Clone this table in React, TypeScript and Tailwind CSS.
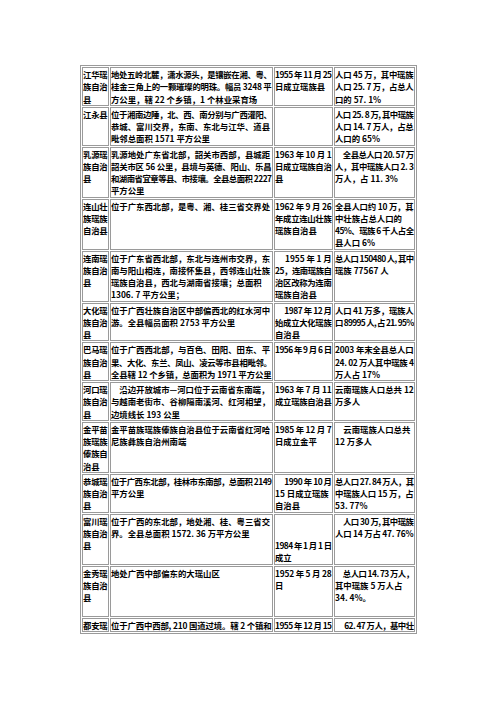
import React, { useLayoutEffect, useRef, useState } from "react";

type Row = [string[], string[], string[], string[]];

const rows: Row[] = [
  [
    ["江华瑶", "族自治", "县"],
    ["地处五岭北麓，潇水源头，是镶嵌在湘、粤、", "桂金三角上的一颗璀璨的明珠。幅员 3248 平", "方公里，辖 22 个乡镇，1 个林业采育场"],
    ["1955 年 11 月 25", "日成立瑶族县"],
    ["人口 45 万，其中瑶族", "人口 25. 7 万，占总人", "口的 57. 1%"],
  ],
  [
    ["江永县"],
    ["位于湘南边陲，北、西、南分别与广西灌阳、", "恭城、富川交界，东南、东北与江华、道县", "毗邻总面积 1571 平方公里"],
    [],
    ["人口 25. 8 万, 其中瑶族", "人口 14. 7 万人，占总", "人口的 65%"],
  ],
  [
    ["乳源瑶", "族自治", "县"],
    ["乳源地处广东省北部，韶关市西部，县城距", "韶关市区 56 公里，县境与英德、阳山、乐昌", "和湖南省宜章等县、市接壤。全县总面积 2227", "平方公里"],
    ["1963 年 10 月 1", "日成立瑶族自治", "县"],
    ["\u3000全县总人口 20. 57 万", "人，其中瑶族人口 2. 3", "万人，占 11. 3%"],
  ],
  [
    ["连山壮", "族瑶族", "自治县"],
    ["位于广东西北部，是粤、湘、桂三省交界处"],
    ["1962 年 9 月 26", "年成立连山壮族", "瑶族自治县"],
    ["全县人口约 10 万，其", "中壮族占总人口的", "45%、瑶族 6 千人占全", "县人口 6%"],
  ],
  [
    ["连南瑶", "族自治", "县"],
    ["位于广东省西北部，东北与连州市交界，东", "南与阳山相连，南接怀集县，西邻连山壮族", "瑶族自治县，西北与湖南省接壤；总面积", "1306. 7 平方公里；"],
    ["\u3000 1955 年 1 月", "25，连南瑶族自", "治区改称为连南", "瑶族自治县"],
    ["总人口 150480 人, 其中", "瑶族 77567 人"],
  ],
  [
    ["大化瑶", "族自治", "县"],
    ["位于广西壮族自治区中部偏西北的红水河中", "游。全县幅员面积 2753 平方公里"],
    ["\u3000 1987 年 12 月", "始成立大化瑶族", "自治县"],
    ["人口 41 万多，瑶族人", "口 89995 人, 占 21. 95%"],
  ],
  [
    ["巴马瑶", "族自治", "县"],
    ["位于广西西北部，与百色、田阳、田东、平", "果、大化、东兰、凤山、凌云等市县相毗邻。", "全县辖 12 个乡镇，总面积为 1971 平方公里"],
    ["1956 年 9 月 6 日"],
    ["2003 年末全县总人口", "24. 02 万人其中瑶族 4", "万人占 17%"],
  ],
  [
    ["河口瑶", "族自治", "县"],
    ["\u3000沿边开放城市—河口位于云南省东南端，", "与越南老街市、谷柳隔南溪河、红河相望，", "边境线长 193 公里"],
    ["1963 年 7 月 11", "成立瑶族自治县"],
    ["云南瑶族人口总共 12", "万多人"],
  ],
  [
    ["金平苗", "族瑶族", "傣族自", "治县"],
    ["金平苗族瑶族傣族自治县位于云南省红河哈", "尼族彝族自治州南端"],
    ["1985 年 12 月 7", "日成立金平"],
    ["\u3000云南瑶族人口总共", "12 万多人"],
  ],
  [
    ["恭城瑶", "族自治", "县"],
    ["位于广西东北部，桂林市东南部，总面积 2149", "平方公里"],
    ["\u3000 1990 年 10 月", "15 日成立瑶族", "自治县"],
    ["总人口 27. 84 万人，其", "中瑶族人口 15 万，占", "53. 77%"],
  ],
  [
    ["富川瑶", "族自治", "县"],
    ["位于广西的东北部，地处湘、桂、粤三省交", "界。全县总面积 1572. 36 万平方公里"],
    ["", "", "1984 年 1 月 1 日", "成立"],
    ["\u3000人口 30 万, 其中瑶族", "人口 14 万占 47. 76%"],
  ],
  [
    ["金秀瑶", "族自治", "县", ""],
    ["地处广西中部偏东的大瑶山区"],
    ["1952 年 5 月 28", "日"],
    ["\u3000总人口 14. 73 万人，", "其中瑶族 5 万人占", "34. 4%。"],
  ],
  [
    ["都安瑶"],
    ["位于广西中西部, 210 国道过境。辖 2 个镇和"],
    ["1955 年 12 月 15"],
    ["\u3000 62. 47 万人，基中壮"],
  ],
];

function FitLine({ text }: { text: string }) {
  const boxRef = useRef<HTMLDivElement>(null);
  const spanRef = useRef<HTMLSpanElement>(null);
  const [ls, setLs] = useState(0);
  useLayoutEffect(() => {
    const box = boxRef.current;
    const span = spanRef.current;
    if (!box || !span) return;
    const avail = box.clientWidth;
    const w = span.getBoundingClientRect().width;
    if (w > avail && text.length > 1) {
      setLs(-(w - avail + 0.5) / text.length);
    }
  }, [text]);
  return (
    <div ref={boxRef} className="whitespace-pre h-[12.25px] overflow-hidden">
      <span ref={spanRef} style={ls ? { letterSpacing: `${ls}px` } : undefined}>
        {text === "" ? "\u00a0" : text}
      </span>
    </div>
  );
}

function Cell({ lines }: { lines: string[] }) {
  return (
    <div className="border border-[#9a9a9a] min-w-0">
      {lines.map((l, i) => (
        <FitLine key={i} text={l} />
      ))}
    </div>
  );
}

export default function App() {
  return (
    <div className="w-[496px] h-[702px] bg-white overflow-hidden pt-[65px] pl-[80px]">
      <div
        className="grid grid-cols-[27px_163px_59px_81px] gap-[1px] p-[1px] border border-[#9a9a9a] w-[337px] text-black font-bold text-[8.4px] leading-[12.25px]"
        style={{ fontFamily: '"Noto Sans CJK SC", "Noto Sans", sans-serif' }}
      >
        {rows.map((r, ri) => (
          <React.Fragment key={ri}>
            <Cell lines={r[0]} />
            <Cell lines={r[1]} />
            <Cell lines={r[2]} />
            <Cell lines={r[3]} />
          </React.Fragment>
        ))}
      </div>
    </div>
  );
}
